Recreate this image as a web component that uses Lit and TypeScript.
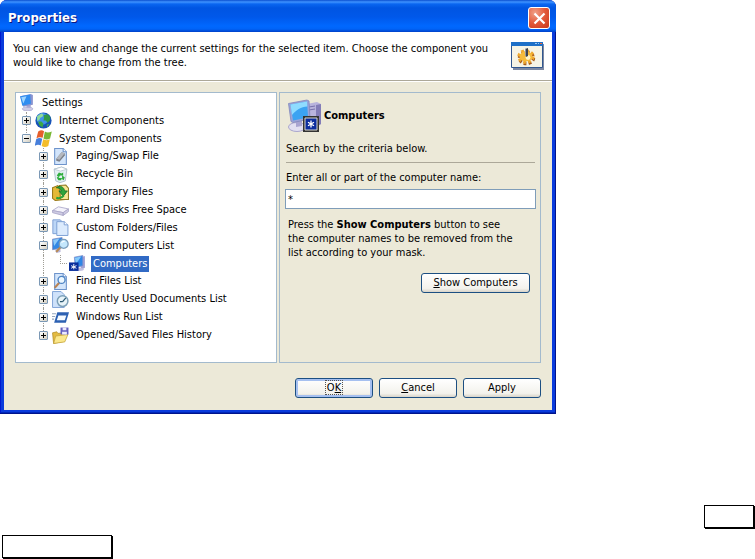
import { LitElement, html, css, svg, nothing } from "lit";
import { customElement, state } from "lit/decorators.js";
import { classMap } from "lit/directives/class-map.js";

type Node = { label: string; icon: string; level: number; open?: boolean; leaf?: boolean };

const NODES: Node[] = [
  { label: "Settings", icon: "monitor", level: 0, leaf: true },
  { label: "Internet Components", icon: "globe", level: 1 },
  { label: "System Components", icon: "flag", level: 1, open: true },
  { label: "Paging/Swap File", icon: "paging", level: 2 },
  { label: "Recycle Bin", icon: "bin", level: 2 },
  { label: "Temporary Files", icon: "temp", level: 2 },
  { label: "Hard Disks Free Space", icon: "disk", level: 2 },
  { label: "Custom Folders/Files", icon: "files", level: 2 },
  { label: "Find Computers List", icon: "find", level: 2, open: true },
  { label: "Computers", icon: "computer", level: 3, leaf: true },
  { label: "Find Files List", icon: "findfile", level: 2 },
  { label: "Recently Used Documents List", icon: "recent", level: 2 },
  { label: "Windows Run List", icon: "run", level: 2 },
  { label: "Opened/Saved Files History", icon: "saved", level: 2 },
];

const page = svg`<path d="M2.5 .5h8l3 3v12h-11z" fill="#d3e5fb" stroke="#6d93cb"/><path d="M10.500 .5v3h3" fill="#fff" stroke="#6d93cb"/>`;

const ICONS: Record<string, unknown> = {
  monitor: svg`<ellipse cx="9" cy="14" rx="5" ry="1.800" fill="#cfcde6" stroke="#a6a4cd" stroke-width=".6"/><path d="M8 10l4-1v4H8z" fill="#a9a8d4"/><path d="M2 2l10-2 2 1v9l-9 2z" fill="#8a94cf"/><path d="M2 2l9.500-1.600.6 8.800L4 11z" fill="#2f8df0"/><path d="M3 3l5-1-3 7z" fill="#9fd6ff"/>`,
  globe: svg`<circle cx="8" cy="8" r="7.600" fill="#1753b8"/><circle cx="7" cy="6.500" r="5.500" fill="#3e93ea"/><path d="M2 4l4-2.500 2 1-1 2-2 1-1 2-2 1z" fill="#8fdc9a"/><path d="M8 3l4-1 2.500 3-.5 3-2 2-2-2-2 0 .5-3z" fill="#2f9a48"/><path d="M3 9l3 0 2 2-1 3.500-3-2z" fill="#3aa845"/><path d="M11 12l2.500-1-2 3z" fill="#49b64f"/>`,
  flag: svg`<path d="M3 1.500c2-1.500 3.800-1.500 5.500-.4L7.200 7.400C5.500 6.400 3.300 6.500 1.300 7.900z" fill="#e65f2b"/><path d="M9.300 1.500c2 1.200 4 1 6.500-.2L14.200 8c-2.200 1.200-4.200 1.200-6.200 0z" fill="#78b835"/><path d="M1.100 8.700c2-1.400 4-1.400 5.700-.4L5.400 14.600c-1.700-1-3.600-1-5.700.4z" fill="#477fdb"/><path d="M7.700 8.800c2 1.100 4.100 1 6.200-.2L12.500 15c-2 1.200-4.300 1.200-6.200 0z" fill="#f4bd2b"/>`,
  paging: svg`${page}<path d="M4 10l5-6 3 1v2l-5 6-3-1z" fill="#7c8088"/><path d="M4 10l5-6 3 1-5 6z" fill="#b4b8bf"/>`,
  bin: svg`<path d="M2 3l7-2 5 2-1.500 11-5 1.700L3.500 14z" fill="#e3eef3" stroke="#a8bac6" stroke-width=".8"/><path d="M2 3l6 1.800L14 3 9 1z" fill="#fff" stroke="#a8bac6" stroke-width=".6"/><path d="M4.500 9l2-3 2.500 1 1.500-1v3H7.500l-1 1.500zM6 13.500l-1.500-2.500 1-1 1.500 1.200h2.500l-1 2.300zM9.500 9l2.500 1.500-1 3-1.500-1z" fill="#2eae3d"/>`,
  temp: svg`<path d="M.5 3.500l5-2 1.500 2h5v11l-9 1-2.500-2z" fill="#e5b936" stroke="#9b7b1c"/><path d="M7 1.500l6-.5 2.500 3v10.500H8z" fill="#f8e694" stroke="#927b24"/><path d="M4 3.500c4-2.500 7-1 8 3h2.500l-4 5-4-5H9C8 4.500 6 3.500 4 3.500z" fill="#2fa43b" stroke="#116b26" stroke-width=".7"/><path d="M4 13c3 1 5 .5 7-2" stroke="#2fa43b" stroke-width="2" fill="none"/>`,
  disk: svg`<path d="M.5 8L6 4.500l9.500 2L10.500 10z" fill="#f4f3fb" stroke="#aaa7c9" stroke-width=".8"/><path d="M.5 8v2l10 2.700V10zM10.500 10v2.700l5-3.700V6.500z" fill="#cfcce4" stroke="#aaa7c9" stroke-width=".8"/>`,
  files: svg`<path d="M.8 .8h7l2 2v11h-9z" fill="#bcd6f6" stroke="#7d9fd4" stroke-width=".9"/><path d="M4.500 2.500h7l3.500 3v10H4.500z" fill="#dcebfd" stroke="#7d9fd4" stroke-width=".9"/><path d="M11.500 2.500v3H15" fill="#fff" stroke="#7d9fd4" stroke-width=".9"/>`,
  find: svg`<path d="M3 12l5-2v4l-4 1z" fill="#b5b4da"/><path d="M.5 2l9-1.500v9.500l-9 2z" fill="#3388e4" stroke="#7d89bf" stroke-width=".7"/><path d="M1 2.500l6-1-5 7z" fill="#8fcaf8"/><path d="M8 9.500l-4 4.500" stroke="#b88a52" stroke-width="2"/><circle cx="11" cy="6.500" r="4.200" fill="#c4e7fc" stroke="#7a9dbc" stroke-width="1.200"/><path d="M9 5.500c.5-1 1.500-1.500 3-1.500" stroke="#fff" fill="none"/>`,
  computer: svg`<path d="M11 2l4-1v11l-4 2z" fill="#a5a3d4"/><path d="M5 2l8-1.500V10l-7 2z" fill="#2f86e6" stroke="#8790c9" stroke-width=".7"/><path d="M5.500 2.500l6-1-5 7z" fill="#86c9fa"/><ellipse cx="10" cy="13.500" rx="4" ry="1.500" fill="#c1bfe1"/><path d="M0 7h9v8H0z" fill="#0a2f9c"/><path d="M4.500 8.500v5M2 10l5 2.500M7 10l-5 2.500" stroke="#fff" stroke-width=".9"/>`,
  findfile: svg`${page}<path d="M7 9l-4.500 5" stroke="#ba8353" stroke-width="2"/><circle cx="9" cy="6.500" r="3.300" fill="#ecf7ff" stroke="#4e84c4" stroke-width="1.300"/>`,
  recent: svg`<path d="M.5 .5h8l3 3v12H.5z" fill="#cfe2fa" stroke="#7fa3d6" stroke-width=".9"/><circle cx="10" cy="9.500" r="5" fill="#e7f3f8" stroke="#7ca0b8" stroke-width="1.400"/><path d="M10 10l3-3.500M10 10H7.500" stroke="#2b5871" stroke-width="1.200"/>`,
  run: svg`<path d="M5 3h11l-3 10H2z" fill="#2c60b2"/><path d="M6 6h7.500L12 10.500H4.500z" fill="#f5faff"/><path d="M0 4.500h4M0 7h3M0 9.500h2" stroke="#97a7bd"/>`,
  saved: svg`<path d="M.5 5.500l4-1 1 1.500 6-.5v8l-10 2z" fill="#e4bb40" stroke="#b18c24" stroke-width=".7"/><path d="M3.500 8.500L15 7l-3 7-10.500 1.500z" fill="#fbe88c" stroke="#c5a338" stroke-width=".7"/><path d="M8 .5h7.500V7H8z" fill="#6560c0"/><path d="M10 .5h3.500V3H10zM9.500 4.500h4.500V7H9.500z" fill="#eceafd"/>`,
};

const closeX = html`<svg class="cross" viewBox="0 0 13 13" aria-hidden="true">
  <path d="M1.500 1.500l10 10M11.500 1.500l-10 10" stroke="#fff" stroke-width="2.200" fill="none" />
</svg>`;

const gearWindow = html`<svg class="banner" viewBox="0 0 34 28" aria-hidden="true">
  <path d="M2 2h31v26H2z" fill="#5d6b8c" opacity=".8" />
  <path d="M.5 .5h31v25H.5z" fill="#f6f4e6" stroke="#31578f" />
  <path d="M0 0h32v4H0z" fill="#1e70c8" />
  <path d="M24 1.500h2M27 1.500h1" stroke="#9cc8f4" /><path d="M29 1.500h2" stroke="#f06a3a" />
  <ellipse cx="15.500" cy="16" rx="7" ry="5.500" fill="none" stroke="#a85b1a" stroke-width="3.400" stroke-dasharray="2.700 2.200" />
  <ellipse cx="15" cy="14.500" rx="7" ry="5.500" fill="none" stroke="#efa92f" stroke-width="3.400" stroke-dasharray="2.700 2.200" />
  <ellipse cx="15" cy="14.500" rx="6.500" ry="5" fill="#f6bb3c" />
  <circle cx="17" cy="15.500" r="2.400" fill="#fff2c4" />
  <path d="M14 7l3-1v8l-2 1z" fill="#3e4450" /><path d="M14 7l1-.4V14h-1z" fill="#9299a5" />
</svg>`;

const bigComputer = html`<svg class="big" viewBox="0 0 34 34" aria-hidden="true">
  <path d="M19 5l10-2 4 2v20l-5 3-9-3z" fill="#b9b4dd" />
  <path d="M28 6l5-1v20l-5 3z" fill="#837db8" />
  <path d="M21 8l6-1M21 11l6-1" stroke="#7771ab" />
  <ellipse cx="9" cy="28" rx="8.500" ry="4.500" fill="#e2e0f1" stroke="#aaa6cd" />
  <path d="M8 21l6-1v7l-6 1z" fill="#a9a5d1" />
  <path d="M.5 4.500L19 1l2 1 1 18-17 3.500-2-1z" fill="#9ca4d8" stroke="#7f86bd" stroke-width=".8" />
  <path d="M2.500 5.500L19 2.500l1 16L5 21.500z" fill="#3ba3f2" />
  <path d="M2.500 5.500L19 2.500l.3 5C13 8 8 11 4 16z" fill="#8fdcff" />
  <path d="M16.500 18.500h13v13h-13z" fill="#0c2d9e" stroke="#333" stroke-width="3" />
  <path d="M17 19h12v12H17z" fill="#0c2d9e" stroke="#d8d6cc" />
  <path d="M23 21.500v7M20 23.300l6 3.500M26 23.300l-6 3.500" stroke="#fff" stroke-width="1.300" />
</svg>`;

@customElement("app-root")
export class AppRoot extends LitElement {
  @state() private selected = "Computers";
  @state() private mask = "*";

  static styles = css`
    :host {
      display: block;
      background: #fff;
      color: #000;
      font: 11px/14px "DejaVu Sans Condensed", "DejaVu Sans", sans-serif;
    }
    * { box-sizing: border-box; }
    button, input { font: inherit; color: inherit; }
    .window {
      max-width: 556px;
      padding: 0 4px 4px;
      background: #0a3bdc;
      box-shadow: inset -1px -1px #00138c, inset 1px 0 #0019cf, inset 0 -2px #0127b8;
      border-radius: 7px 7px 0 0;
    }
    .titlebar {
      display: flex;
      align-items: center;
      justify-content: space-between;
      height: 32px;
      margin: 0 -4px;
      padding: 4px 6px 0 8px;
      border-radius: 7px 7px 0 0;
      background: linear-gradient(#0a4fd0 0, #3f93ff 2px, #0a66f0 4px, #0055e2 8px, #0058ea 17px, #0068ff 26px, #0064f8 29px, #0040c8 32px);
    }
    .title {
      margin: 0;
      font-size: 13px;
      line-height: 16px;
      color: #fff;
      text-shadow: 1px 1px #0a1883;
    }
    .close {
      display: grid;
      place-items: center;
      width: 22px;
      height: 22px;
      padding: 0;
      border: 1px solid #fff;
      border-radius: 3px;
      background: radial-gradient(circle at 30% 25%, #f0a188, #e2593a 50%, #c8371a);
    }
    .cross { width: 13px; height: 13px; }
    .header {
      display: flex;
      justify-content: space-between;
      gap: 12px;
      height: 48px;
      padding: 10px 7px 0 9px;
      background: #fff;
    }
    .intro { margin: 0; max-width: 490px; }
    .banner { flex: none; width: 34px; height: 28px; }
    .body {
      padding: 11px 11px 12px;
      background: #ece9d8;
      border-top: 1px solid #aca899;
      box-shadow: inset 0 1px #fff;
    }
    .panes {
      display: grid;
      grid-template-columns: 1fr 1fr;
      gap: 2px;
    }
    .tree, .detail { border: 1px solid #a3bacd; }
    .tree {
      display: grid;
      grid-auto-rows: 1fr;
      min-height: 271px;
      margin: 0;
      padding: 1px 2px 18px;
      background: #fff;
      list-style: none;
    }
    .row { display: flex; align-items: stretch; }
    .cell { flex: none; display: grid; align-items: center; justify-content: center; width: 17px; position: relative; }
    .guide::before {
      content: "";
      position: absolute;
      left: 8px;
      top: 0;
      bottom: 0;
      border-left: 1px dotted #a09e96;
    }
    .end::before { bottom: 50%; }
    .elbow::before {
      content: "";
      position: absolute;
      left: 8px;
      top: 0;
      bottom: 50%;
      width: 6px;
      border: dotted #a09e96;
      border-width: 0 0 1px 1px;
    }
    .expander {
      position: relative;
      display: block;
      width: 9px;
      height: 9px;
      padding: 0;
      border: 1px solid #7b98b5;
      border-radius: 1px;
      background: linear-gradient(135deg, #fff, #d3cfc2);
    }
    .sign { display: block; width: 7px; height: 7px; }
    .icon { align-self: center; flex: none; width: 17px; height: 17px; margin-right: 5px; }
    .label {
      align-self: center;
      padding: 1px 2px;
      border: 0;
      background: none;
      white-space: nowrap;
      text-align: left;
    }
    .label.on { background: #316ac5; color: #fff; }
    .detail { padding: 6px 4px 8px 5px; display: flex; flex-direction: column; }
    .heading { display: flex; align-items: center; gap: 2px; padding-left: 3px; }
    .heading-text { margin: 0; font-size: 11px; line-height: 14px; }
    .big { width: 34px; height: 34px; }
    .sub { margin: 9px 1px 0; padding-bottom: 6px; border-bottom: 1px solid #aca899; }
    .field-label { margin: 8px 1px 4px; }
    .field {
      width: 100%;
      height: 20px;
      padding: 0 2px;
      border: 1px solid #7f9db9;
      border-radius: 0;
      background: #fff;
    }
    .hint { margin: 9px 3px 13px; max-width: 229px; }
    .btn {
      width: 78px;
      height: 20px;
      padding: 0;
      border: 1px solid #1c4f82;
      border-radius: 3px;
      background: linear-gradient(#fff, #f3f2ec 80%, #d8d3c8);
    }
    .show { align-self: flex-end; width: 109px; margin-right: 6px; }
    .default { box-shadow: inset 0 0 0 2px #a6c0f0; }
    .focus { outline: 1px dotted #555; padding: 0 1px; }
    .actions { display: flex; justify-content: flex-end; gap: 6px; margin-top: 15px; }
    .marks { display: flex; flex-direction: column; gap: 7px; padding: 91px 1px 1px 2px; }
    .mark { height: 23px; border: 1px solid #000; box-shadow: 1px 1px #000; }
    .short { width: 50px; align-self: flex-end; }
    .long { width: 110px; }
  `;

  private renderRow(n: Node) {
    const cells = [];
    for (let i = 1; i < n.level; i++) {
      cells.push(html`<span class=${classMap({ cell: true, guide: i === 2 })}></span>`);
    }
    const last = n.label === "System Components" || n.label === "Opened/Saved Files History";
    return html`<li class="row" role="treeitem" aria-level=${n.level + 1} aria-selected=${n.label === this.selected}>
      ${cells}
      ${n.leaf
        ? n.level ? html`<span class="cell elbow"></span>` : nothing
        : html`<span class=${classMap({ cell: true, guide: true, end: last })}>
            <button class="expander" aria-label="${n.open ? "Collapse" : "Expand"} ${n.label}">
              <svg class="sign" viewBox="0 0 7 7" aria-hidden="true">
                <path d=${n.open ? "M1 3h5v1H1z" : "M1 3h5v1H1zM3 1h1v5H3z"} />
              </svg>
            </button>
          </span>`}
      <svg class="icon" viewBox="0 0 16 16" aria-hidden="true">${ICONS[n.icon]}</svg>
      <button class=${classMap({ label: true, on: n.label === this.selected })} @click=${() => (this.selected = n.label)}>${n.label}</button>
    </li>`;
  }

  render() {
    return html`
      <section class="window" role="dialog" aria-labelledby="title">
        <header class="titlebar">
          <h1 class="title" id="title">Properties</h1>
          <button class="close" aria-label="Close">${closeX}</button>
        </header>
        <div class="header">
          <p class="intro">You can view and change the current settings for the selected item. Choose the component you would like to change from the tree.</p>
          ${gearWindow}
        </div>
        <div class="body">
          <div class="panes">
            <ul class="tree" role="tree" aria-label="Settings">${NODES.map((n) => this.renderRow(n))}</ul>
            <div class="detail">
              <div class="heading">${bigComputer}<h2 class="heading-text">Computers</h2></div>
              <p class="sub">Search by the criteria below.</p>
              <label class="field-label" for="mask">Enter all or part of the computer name:</label>
              <input class="field" id="mask" type="text" .value=${this.mask}
                @input=${(e: Event) => (this.mask = (e.target as HTMLInputElement).value)} />
              <p class="hint">Press the <b>Show Computers</b> button to see the computer names to be removed from the list according to your mask.</p>
              <button class="btn show"><u>S</u>how Computers</button>
            </div>
          </div>
          <div class="actions">
            <button class="btn default"><span class="focus">O<u>K</u></span></button>
            <button class="btn"><u>C</u>ancel</button>
            <button class="btn">Apply</button>
          </div>
        </div>
      </section>
      <div class="marks">
        <div class="mark short"></div>
        <div class="mark long"></div>
      </div>
    `;
  }
}
